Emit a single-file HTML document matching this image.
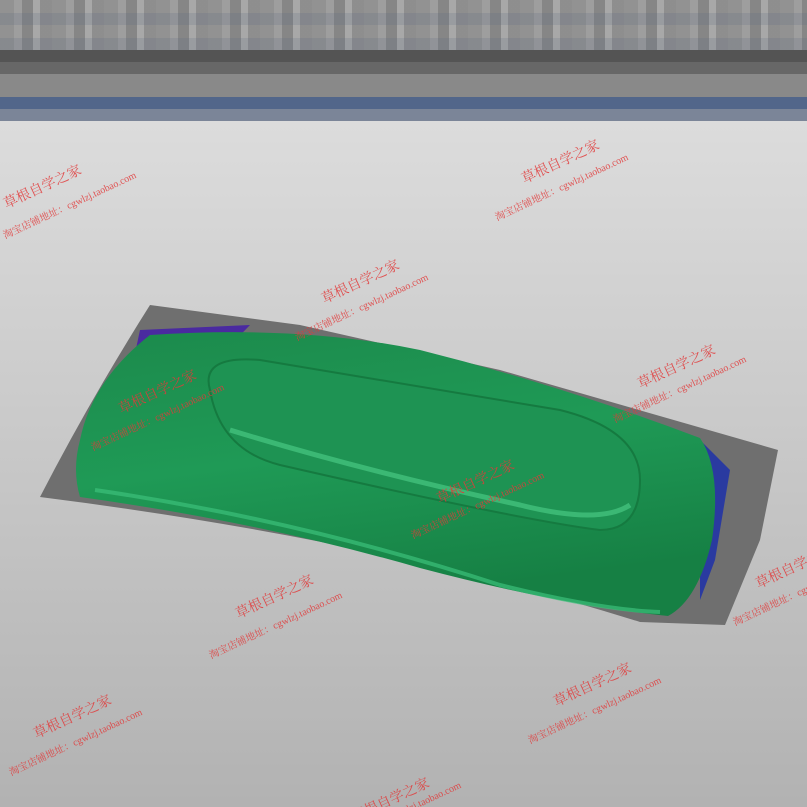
<!DOCTYPE html>
<html><head><meta charset="utf-8"><style>
html,body{margin:0;padding:0;width:807px;height:807px;overflow:hidden}
body{position:relative;background:linear-gradient(#dcdcdc 120px,#c8c8c8 450px,#b2b2b2 807px);font-family:"Liberation Serif","Noto Serif CJK SC",serif}
.wm{position:absolute;color:#e23a3a;transform-origin:0 0;transform:rotate(-25deg);white-space:nowrap;opacity:.85}
.a{font-size:14px}.b{font-size:10px}
</style></head><body>
<div style="position:absolute;left:0;top:0;width:807px;height:50px;background:repeating-linear-gradient(90deg,#8c8c8c 0 14px,#999 14px 22px,#7f7f7f 22px 33px,#a4a4a4 33px 40px,#888 40px 52px)"></div>
<div style="position:absolute;left:0;top:0;width:807px;height:50px;background:repeating-linear-gradient(0deg,rgba(120,130,150,.25) 0 12px,rgba(200,200,200,.1) 12px 25px)"></div>
<div style="position:absolute;left:0;top:50px;width:807px;height:12px;background:#545454"></div>
<div style="position:absolute;left:0;top:62px;width:807px;height:12px;background:#676767"></div>
<div style="position:absolute;left:0;top:74px;width:807px;height:23px;background:#898989"></div>
<div style="position:absolute;left:0;top:97px;width:807px;height:12px;background:#52668a"></div>
<div style="position:absolute;left:0;top:109px;width:807px;height:12px;background:#7b8598"></div>
<svg width="807" height="807" style="position:absolute;left:0;top:0">
<defs><linearGradient id="g" x1="0" y1="0" x2="0.3" y2="1">
<stop offset="0" stop-color="#1c8a4c"/><stop offset=".5" stop-color="#1f9a56"/><stop offset="1" stop-color="#168044"/></linearGradient></defs>
<path d="M150,305 L300,325 L500,370 L778,450 L760,540 L725,625 L640,622 Q380,540 40,497 Q90,400 150,305Z" fill="#6f6f6f"/>
<path d="M140,330 L250,325 L110,470Z" fill="#4a2aa0"/>
<path d="M700,440 L730,470 L715,560 L700,600Z" fill="#2a3aa0"/>
<path d="M150,335 Q300,325 420,350 Q560,385 700,438 Q722,470 712,540 Q698,600 668,616 Q560,605 420,568 Q260,522 80,497 Q72,470 80,440 Q92,380 150,335Z" fill="url(#g)"/>
<path d="M210,390 Q200,355 260,360 L560,410 Q640,430 640,480 Q640,530 600,530 Q520,520 280,465 Q220,450 210,390Z" fill="#1e9353" stroke="#157a40" stroke-width="2"/>
<path d="M230,430 Q360,470 520,505 Q600,525 630,505" stroke="#4fd08a" stroke-width="5" fill="none" opacity=".6"/>
<path d="M95,490 Q300,520 500,585 Q600,610 660,612" stroke="#3cc07a" stroke-width="4" fill="none" opacity=".7"/>
</svg>
<div class="wm a" style="left:0;top:195px">草根自学之家</div><div class="wm b" style="left:0;top:228px">淘宝店铺地址：cgwlzj.taobao.com</div>
<div class="wm a" style="left:318px;top:290px">草根自学之家</div><div class="wm b" style="left:292px;top:330px">淘宝店铺地址：cgwlzj.taobao.com</div>
<div class="wm a" style="left:518px;top:170px">草根自学之家</div><div class="wm b" style="left:492px;top:210px">淘宝店铺地址：cgwlzj.taobao.com</div>
<div class="wm a" style="left:634px;top:375px">草根自学之家</div><div class="wm b" style="left:610px;top:412px">淘宝店铺地址：cgwlzj.taobao.com</div>
<div class="wm a" style="left:115px;top:400px">草根自学之家</div><div class="wm b" style="left:88px;top:440px">淘宝店铺地址：cgwlzj.taobao.com</div>
<div class="wm a" style="left:433px;top:490px">草根自学之家</div><div class="wm b" style="left:408px;top:528px">淘宝店铺地址：cgwlzj.taobao.com</div>
<div class="wm a" style="left:232px;top:605px">草根自学之家</div><div class="wm b" style="left:206px;top:648px">淘宝店铺地址：cgwlzj.taobao.com</div>
<div class="wm a" style="left:752px;top:575px">草根自学之家</div><div class="wm b" style="left:730px;top:615px">淘宝店铺地址：cgwlzj.taobao.com</div>
<div class="wm a" style="left:550px;top:693px">草根自学之家</div><div class="wm b" style="left:525px;top:733px">淘宝店铺地址：cgwlzj.taobao.com</div>
<div class="wm a" style="left:30px;top:725px">草根自学之家</div><div class="wm b" style="left:6px;top:765px">淘宝店铺地址：cgwlzj.taobao.com</div>
<div class="wm a" style="left:348px;top:808px">草根自学之家</div><div class="wm b" style="left:390px;top:812px">cgwlzj.taobao.com</div>
</body></html>
